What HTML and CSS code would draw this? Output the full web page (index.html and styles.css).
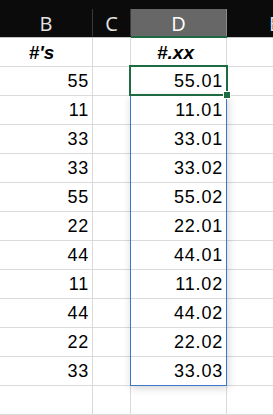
FILE: index.html
```html
<!DOCTYPE html>
<html>
<head>
<meta charset="utf-8">
<link rel="stylesheet" href="styles.css">
</head>
<body>
<div class="sheet">
  <div class="grid">
    <div class="hd"><div class="lbl">B</div></div>
    <div class="hd"><div class="lbl">C</div></div>
    <div class="hd hd-sel"><div class="lbl">D</div></div>
    <div class="hd"><div class="lbl">E</div></div>

    <div class="c title b">#'s</div><div class="c"></div><div class="c title d">#.xx</div><div class="c"></div>
    <div class="c num b">55</div><div class="c"></div><div class="c num d">55.01</div><div class="c"></div>
    <div class="c num b">11</div><div class="c"></div><div class="c num d">11.01</div><div class="c"></div>
    <div class="c num b">33</div><div class="c"></div><div class="c num d">33.01</div><div class="c"></div>
    <div class="c num b">33</div><div class="c"></div><div class="c num d">33.02</div><div class="c"></div>
    <div class="c num b">55</div><div class="c"></div><div class="c num d">55.02</div><div class="c"></div>
    <div class="c num b">22</div><div class="c"></div><div class="c num d">22.01</div><div class="c"></div>
    <div class="c num b">44</div><div class="c"></div><div class="c num d">44.01</div><div class="c"></div>
    <div class="c num b">11</div><div class="c"></div><div class="c num d">11.02</div><div class="c"></div>
    <div class="c num b">44</div><div class="c"></div><div class="c num d">44.02</div><div class="c"></div>
    <div class="c num b">22</div><div class="c"></div><div class="c num d">22.02</div><div class="c"></div>
    <div class="c num b">33</div><div class="c"></div><div class="c num d">33.03</div><div class="c"></div>
    <div class="c"></div><div class="c"></div><div class="c"></div><div class="c"></div>
  </div>
  <div class="range"></div>
  <div class="active"><div class="handle"></div></div>
</div>
</body>
</html>
```
FILE: styles.css
```css
html, body {
  margin: 0;
  padding: 0;
  background: #ffffff;
  overflow: hidden;
}
.sheet {
  position: relative;
  width: 273px;
  height: 415px;
  overflow: hidden;
}
.grid {
  display: grid;
  grid-template-columns: 93px 38px 96px 96px;
  grid-template-rows: 38px repeat(13, 29px);
  width: 323px;
}
.hd {
  background: #0b0b0b;
  border-bottom: 1px solid #c4c4c4;
  box-sizing: border-box;
  padding-top: 9px;
}
.hd .lbl {
  height: 27px;
  box-sizing: border-box;
  border-right: 1px solid #3a3a3a;
  display: flex;
  align-items: center;
  justify-content: center;
  padding-top: 1px;
  font-family: "Open Sans", "Liberation Sans", sans-serif;
  font-size: 20px;
  color: #e4e4e4;
}
.hd-sel {
  border-bottom: 2px solid #1e6b41;
}
.hd-sel .lbl {
  background: #676767;
  color: #ffffff;
  border-right: 1px solid #8a8a8a;
  height: 27px;
}
.c {
  box-sizing: border-box;
  border-right: 1px solid #dadada;
  border-bottom: 1px solid #dadada;
  font-family: "Liberation Sans", Arial, sans-serif;
  color: #000;
  line-height: 28px;
  white-space: nowrap;
}
.num {
  text-align: right;
  font-size: 18px;
  letter-spacing: 0.8px;
}
.num.b { padding-right: 3px; }
.num.d { padding-right: 3px; }
.title {
  text-align: center;
  font-size: 19px;
  font-weight: bold;
  font-style: italic;
  padding-top: 1px;
}
.title.b { padding-right: 9px; }
.title.d { padding-right: 6px; }
.range {
  position: absolute;
  left: 130px;
  top: 95px;
  width: 97px;
  height: 291px;
  box-sizing: border-box;
  border: 1px solid #3b76c8;
  box-shadow: 1px 2px 8px rgba(0, 0, 0, 0.18);
}
.active {
  position: absolute;
  left: 129px;
  top: 65px;
  width: 99px;
  height: 31px;
  box-sizing: border-box;
  border: 2px solid #1e6b41;
}
.handle {
  position: absolute;
  right: -5px;
  bottom: -5px;
  width: 6px;
  height: 6px;
  background: #1e6b41;
  border: 1px solid #ffffff;
}
```
